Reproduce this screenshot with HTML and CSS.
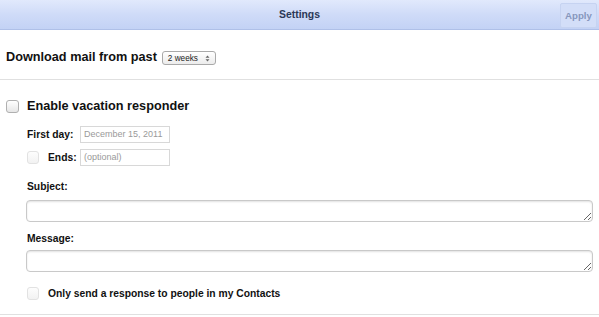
FILE: index.html
```html
<!DOCTYPE html>
<html>
<head>
<meta charset="utf-8">
<link rel="stylesheet" href="styles.css">
</head>
<body>
<div class="header">
  <div class="header-side"></div>
  <div class="title">Settings</div>
  <div class="header-side header-right"><button class="apply">Apply</button></div>
</div>
<div class="section sync">
  <span class="big-label">Download mail from past</span>
  <div class="select"><span>2 weeks</span><svg class="arrows" width="5" height="7" viewBox="0 0 5 7"><path d="M0.5 2.8 L2.5 0.6 L4.5 2.8 Z M0.5 4.2 L2.5 6.4 L4.5 4.2 Z" fill="#666"/></svg></div>
</div>
<div class="section vacation">
  <div class="row enable">
    <span class="checkbox main"></span>
    <span class="big-label">Enable vacation responder</span>
  </div>
  <div class="indent">
    <div class="date-grid">
      <span class="label">First day:</span>
      <div class="input">December 15, 2011</div>
      <span class="ends-cell"><span class="checkbox faded"></span><span class="label">Ends:</span></span>
      <div class="input">(optional)</div>
    </div>
    <div class="label field-label subject-label">Subject:</div>
    <textarea class="area"></textarea>
    <div class="label field-label message-label">Message:</div>
    <textarea class="area"></textarea>
    <div class="row contacts">
      <span class="checkbox faded"></span>
      <span class="label">Only send a response to people in my Contacts</span>
    </div>
  </div>
</div>
</body>
</html>
```
FILE: styles.css
```css
html, body {
  margin: 0;
  padding: 0;
  background: #fff;
}
body {
  width: 599px;
  height: 317px;
  overflow: hidden;
  font-family: "Liberation Sans", Arial, Helvetica, sans-serif;
  color: #111;
}
.header {
  height: 30px;
  box-sizing: border-box;
  border-bottom: 1px solid #afc0e8;
  background: linear-gradient(to bottom, #e1e9fc 0%, #cfdbf8 50%, #c3d2f5 100%);
  display: grid;
  grid-template-columns: 1fr auto 1fr;
  align-items: center;
}
.title {
  font-weight: bold;
  font-size: 10.4px;
  color: #2b3857;
}
.header-right {
  display: flex;
  justify-content: flex-end;
  padding-right: 2px;
}
.apply {
  width: 37px;
  height: 25px;
  margin-top: 1px;
  padding: 0;
  border: 1px solid #c6d3f1;
  border-radius: 2px;
  background: #d3def8;
  color: #8797bd;
  font-family: "Liberation Sans", Arial, sans-serif;
  font-weight: bold;
  font-size: 9.7px;
}
.section {
  border-bottom: 1px solid #e0e0e0;
}
.sync {
  height: 50px;
  box-sizing: border-box;
  padding: 6px 6px 0 6px;
  display: flex;
  align-items: center;
  gap: 5px;
}
.big-label {
  font-weight: bold;
  font-size: 12.7px;
  line-height: 13px;
}
.select {
  width: 54px;
  height: 14px;
  box-sizing: border-box;
  border: 1px solid #a9a9a9;
  border-radius: 3px;
  background: linear-gradient(to bottom, #fff, #ececec);
  display: flex;
  align-items: center;
  justify-content: space-between;
  padding: 0 5px 0 5px;
  font-size: 8.2px;
  color: #222;
  margin-top: 1px;
}
.arrows {
  display: block;
}
.vacation {
  padding: 20px 6px 15px 6px;
  height: 235px;
  box-sizing: border-box;
}
.row {
  display: flex;
  align-items: center;
}
.enable {
  gap: 8px;
  height: 13px;
}
.checkbox {
  display: inline-block;
  box-sizing: border-box;
  border-radius: 3px;
  flex: none;
}
.checkbox.main {
  width: 13px;
  height: 13px;
  border: 1px solid #b0b0b0;
  background: linear-gradient(to bottom, #ffffff, #e6e6e6);
}
.checkbox.faded {
  width: 12px;
  height: 13px;
  border: 1px solid #e2e2e2;
  background: linear-gradient(to bottom, #fdfdfd, #f2f2f2);
}
.indent {
  padding-left: 21px;
}
.label {
  font-weight: bold;
  font-size: 10.3px;
  line-height: 12px;
}
.date-grid {
  margin-top: 13px;
  display: grid;
  grid-template-columns: 53px 90px;
  grid-template-rows: 17px 17px;
  row-gap: 6px;
  align-items: center;
}
.ends-cell {
  display: flex;
  align-items: center;
  gap: 9px;
}
.input {
  height: 17px;
  box-sizing: border-box;
  border: 1px solid #d8d8d8;
  font-size: 9px;
  color: #9a9a9a;
  padding: 0 3px;
  line-height: 15px;
}
.field-label {
  display: block;
}
.subject-label {
  margin-top: 15px;
}
.message-label {
  margin-top: 11px;
}
.area {
  display: block;
  width: 567px;
  height: 22px;
  box-sizing: border-box;
  margin: 7px 0 0 -1px;
  border: 1px solid #c9c9c9;
  border-radius: 4px;
  box-shadow: inset 0 1px 2px rgba(0,0,0,0.12);
  background: #fff;
  padding: 2px;
  font-size: 10px;
  font-family: "Liberation Sans", Arial, sans-serif;
  resize: vertical;
  outline: none;
}
.message-label + .area {
  margin-top: 5px;
}
.contacts {
  margin-top: 15px;
  gap: 9px;
  height: 13px;
}
```
